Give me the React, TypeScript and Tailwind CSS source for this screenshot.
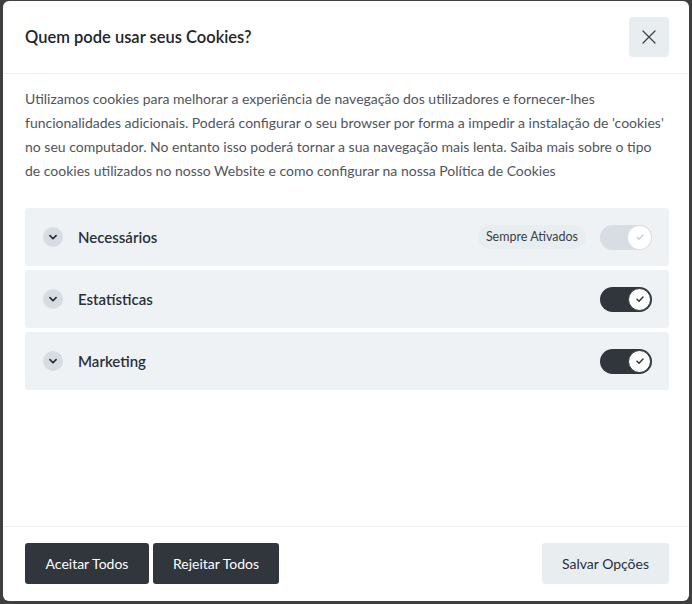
import React from 'react';

type Category = {
  name: string;
  enabled: boolean;
  locked?: boolean;
};

const categories: Category[] = [
  { name: 'Necessários', enabled: true, locked: true },
  { name: 'Estatísticas', enabled: true },
  { name: 'Marketing', enabled: true },
];

const ChevronDown: React.FC<{ className?: string }> = ({ className }) => (
  <svg viewBox="0 0 16 16" fill="none" stroke="currentColor" strokeWidth={2} strokeLinecap="round" strokeLinejoin="round" className={className}>
    <path d="M4.5 6.5 8 10l3.5-3.5" />
  </svg>
);

const CloseIcon: React.FC<{ className?: string }> = ({ className }) => (
  <svg viewBox="0 0 16 16" fill="none" stroke="currentColor" strokeWidth={1.2} strokeLinecap="round" className={className}>
    <path d="M2 2l12 12M14 2 2 14" />
  </svg>
);

const CheckIcon: React.FC<{ className?: string }> = ({ className }) => (
  <svg viewBox="0 0 12 12" fill="none" stroke="currentColor" strokeWidth={1.5} strokeLinecap="round" strokeLinejoin="round" className={className}>
    <path d="M3 6.3 5 8.2 9 4" />
  </svg>
);

const Toggle: React.FC<{ on: boolean; locked?: boolean }> = ({ on, locked }) => (
  <div
    className={
      locked
        ? 'flex items-center justify-end w-[52px] h-[25px] rounded-full bg-[#d7dde2] p-px'
        : 'flex items-center justify-end w-[52px] h-[25px] rounded-full bg-[#31363d] p-px'
    }
  >
    <div
      className={
        locked
          ? 'flex items-center justify-center w-[23px] h-[23px] rounded-full bg-white text-[#c9d0d6]'
          : 'flex items-center justify-center w-[23px] h-[23px] rounded-full bg-white border border-[#31363d] text-[#31363d]'
      }
    >
      {on && <CheckIcon className="w-3 h-3" />}
    </div>
  </div>
);

const CategoryRow: React.FC<{ category: Category }> = ({ category }) => (
  <div className="flex items-center h-[58px] rounded-[3px] bg-[#eef2f5] pl-[18px] pr-[17px]">
    <span className="flex items-center justify-center w-5 h-5 rounded-full bg-[#d6dce1] text-[#2b3036]">
      <ChevronDown className="w-3.5 h-3.5" />
    </span>
    <span className="ml-[15px] text-[15px] font-semibold text-[#2b3036]">{category.name}</span>
    <div className="ml-auto flex items-center gap-[14px]">
      {category.locked && (
        <span className="rounded-full bg-[#e8edf0] px-2 py-[3px] text-[12.5px] text-[#3a3f45]">Sempre Ativados</span>
      )}
      <Toggle on={category.enabled} locked={category.locked} />
    </div>
  </div>
);

export default function App() {
  return (
    <div className="w-[692px] h-[604px] bg-[#3f3f3f] pt-px pl-[3px] pr-[3px] pb-[3px] font-['Lato',sans-serif]">
      <div className="flex flex-col h-full rounded-[6px] bg-white">
        <header className="flex items-center justify-between h-[73px] border-b border-[#edf0f2] pl-[22px] pr-[20px]">
          <h2 className="text-[16.5px] font-semibold text-[#212529]">Quem pode usar seus Cookies?</h2>
          <button type="button" className="flex items-center justify-center w-10 h-10 rounded-[4px] bg-[#e8edf0] text-[#3a3f45]">
            <CloseIcon className="w-4 h-4" />
          </button>
        </header>

        <div className="flex-1 pl-[22px] pr-[20px] pt-[13px]">
          <p className="text-[14px] leading-[24px] text-[#50555b]">
            Utilizamos cookies para melhorar a experiência de navegação dos utilizadores e fornecer-lhes funcionalidades
            adicionais. Poderá configurar o seu browser por forma a impedir a instalação de 'cookies' no seu computador. No
            entanto isso poderá tornar a sua navegação mais lenta. Saiba mais sobre o tipo de cookies utilizados no nosso
            Website e como configurar na nossa Política de Cookies
          </p>

          <div className="mt-[25px] flex flex-col gap-[4px]">
            {categories.map((c) => (
              <CategoryRow key={c.name} category={c} />
            ))}
          </div>
        </div>

        <footer className="flex items-center h-[75px] border-t border-[#edf0f2] pl-[22px] pr-[20px] pb-[2px]">
          <div className="flex gap-1">
            <button type="button" className="h-[41px] w-[124px] rounded-[3px] bg-[#31363d] text-[14px] text-white">
              Aceitar Todos
            </button>
            <button type="button" className="h-[41px] w-[126px] rounded-[3px] bg-[#31363d] text-[14px] text-white">
              Rejeitar Todos
            </button>
          </div>
          <button type="button" className="ml-auto h-[41px] w-[127px] rounded-[3px] bg-[#e8edf0] text-[14px] text-[#2b3036]">
            Salvar Opções
          </button>
        </footer>
      </div>
    </div>
  );
}
